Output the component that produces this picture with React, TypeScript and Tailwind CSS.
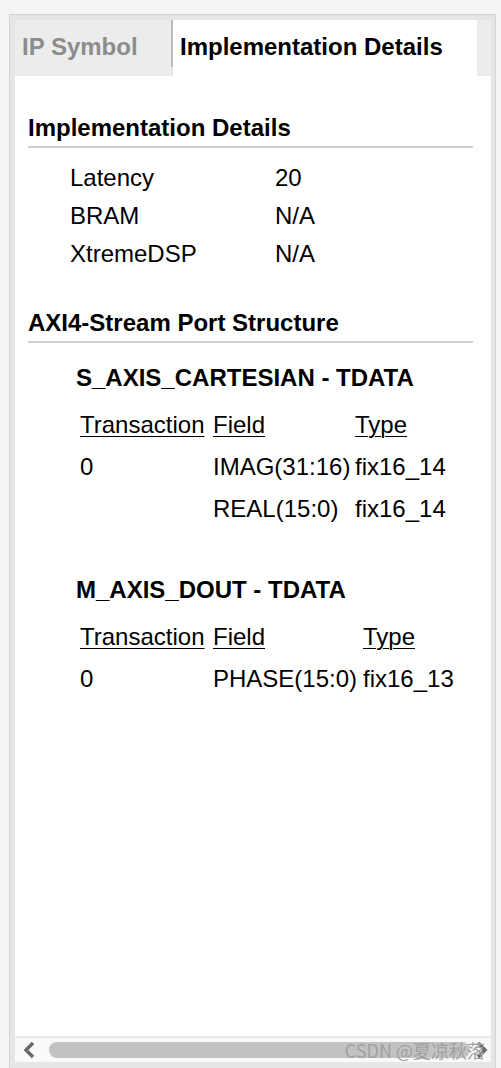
import React from 'react';

const font = { fontFamily: '"Liberation Sans", Arial, sans-serif' };

interface PortRow {
  transaction: string;
  field: string;
  type: string;
}

interface PortTableProps {
  title: string;
  fieldWidth: string;
  rows: PortRow[];
  className?: string;
}

const PortTable = ({ title, fieldWidth, rows, className }: PortTableProps) => (
  <div className={className}>
    <div className="pl-[48px] h-[28px] leading-[28px] text-[24px] font-bold">{title}</div>
    <div className="mt-[12px] pl-[52px]">
      <div className="flex h-[42px] items-center underline underline-offset-[3px] decoration-1">
        <span className="w-[133px]">Transaction</span>
        <span className={fieldWidth}>Field</span>
        <span>Type</span>
      </div>
      {rows.map((r, i) => (
        <div key={i} className="flex h-[42px] items-center">
          <span className="w-[133px]">{r.transaction}</span>
          <span className={fieldWidth}>{r.field}</span>
          <span>{r.type}</span>
        </div>
      ))}
    </div>
  </div>
);

const SectionHeading = ({ children, className }: { children: React.ReactNode; className?: string }) => (
  <div className={`mr-[18px] border-b-2 border-[#d0d0d0] pb-[4px] ${className ?? ''}`}>
    <div className="h-[28px] leading-[28px] text-[24px] font-bold">{children}</div>
  </div>
);

export default function App() {
  const details = [
    ['Latency', '20'],
    ['BRAM', 'N/A'],
    ['XtremeDSP', 'N/A'],
  ];

  return (
    <div className="h-[1068px] w-full overflow-hidden bg-[#f5f5f5] pt-[14px] pl-[9px] pr-[5px]" style={font}>
      <div className="relative border border-[#d4d4d4] bg-[#e6e6e6] pt-[5px] pl-[5px] pr-[4px]">
        {/* tabs */}
        <div className="flex h-[56px]">
          <div className="flex w-[156px] items-center bg-[#ececec] pl-[7px] pb-[2px] text-[24px] font-bold text-[#8c8c8c]">
            IP Symbol
          </div>
          <div className="h-[47px] w-[2px] bg-[#bcbcbc]" />
          <div className="flex w-[304px] items-center bg-white pl-[7px] pb-[2px] text-[24px] font-bold text-black">
            Implementation Details
          </div>
          <div className="flex-1 bg-[#ececec]" />
        </div>

        {/* content */}
        <div className="h-[960px] bg-white pl-[13px] text-[24px] text-black">
          <SectionHeading className="pt-[38px]">Implementation Details</SectionHeading>
          <div className="mt-[11px] pl-[42px]">
            {details.map(([k, v]) => (
              <div key={k} className="flex h-[38px] items-center">
                <span className="w-[205px]">{k}</span>
                <span>{v}</span>
              </div>
            ))}
          </div>

          <SectionHeading className="pt-[36px]">AXI4-Stream Port Structure</SectionHeading>
          <PortTable
            className="mt-[21px]"
            title="S_AXIS_CARTESIAN - TDATA"
            fieldWidth="w-[142px]"
            rows={[
              { transaction: '0', field: 'IMAG(31:16)', type: 'fix16_14' },
              { transaction: '', field: 'REAL(15:0)', type: 'fix16_14' },
            ]}
          />
          <PortTable
            className="mt-[46px]"
            title="M_AXIS_DOUT - TDATA"
            fieldWidth="w-[150px]"
            rows={[{ transaction: '0', field: 'PHASE(15:0)', type: 'fix16_13' }]}
          />
        </div>

        {/* horizontal scrollbar */}
        <div className="h-[2px] bg-[#e6e6e6]" />
        <div className="relative flex h-[24px] items-center bg-[#f9f9f9]">
          <svg className="ml-[7px] h-[18px] w-[14px]" viewBox="0 0 14 18" fill="none">
            <path d="M11 2 L4 9 L11 16" stroke="#6a6a6a" strokeWidth="3.5" />
          </svg>
          <div className="ml-[13px] h-[16px] w-[421px] rounded-full bg-[#c2c2c2]" />
          <svg className="ml-[5px] h-[18px] w-[14px]" viewBox="0 0 14 18" fill="none">
            <path d="M3 2 L10 9 L3 16" stroke="#6a6a6a" strokeWidth="3.5" />
          </svg>
          <div
            className="absolute right-[6px] top-[0px] text-[18px] leading-[24px] text-[#a0a0a0]"
            style={{ fontFamily: '"Noto Sans CJK SC", "Liberation Sans", sans-serif' }}
          >
            CSDN @夏凉秋落
          </div>
        </div>
        <div className="h-[20px]" />
      </div>
    </div>
  );
}
